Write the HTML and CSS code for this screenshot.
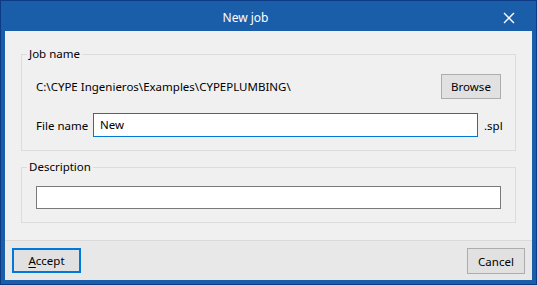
FILE: index.html
```html
<!DOCTYPE html>
<html lang="en">
<head>
<meta charset="utf-8">
<title>New job</title>
<link rel="stylesheet" href="styles.css">
</head>
<body>
<div class="window">
  <div class="titlebar">
    <div class="title">New job</div>
    <div class="close">
      <svg width="12" height="12" viewBox="0 0 12 12"><path d="M1 1 L11 11 M11 1 L1 11" stroke="#ffffff" stroke-width="1.4" fill="none"/></svg>
    </div>
  </div>
  <div class="content">
    <div class="main">
      <fieldset class="group group-job">
        <legend>Job name</legend>
        <div class="row row-path">
          <span class="path">C:\CYPE Ingenieros\Examples\CYPEPLUMBING\</span>
          <button class="btn btn-browse">Browse</button>
        </div>
        <div class="row row-file">
          <label class="lbl">File name</label>
          <div class="input input-focus">New</div>
          <span class="ext">.spl</span>
        </div>
      </fieldset>
      <fieldset class="group group-desc">
        <legend>Description</legend>
        <div class="input input-desc"></div>
      </fieldset>
    </div>
    <div class="footer">
      <button class="btn btn-accept"><u>A</u>ccept</button>
      <button class="btn btn-cancel">Cancel</button>
    </div>
  </div>
</div>
</body>
</html>
```
FILE: styles.css
```css
html, body {
  margin: 0;
  padding: 0;
}
body {
  font-family: "Noto Sans", "Open Sans", sans-serif;
  font-size: 11.5px;
  color: #000;
}
.window {
  box-sizing: border-box;
  width: 537px;
  height: 285px;
  background: #1a5ea9;
  border: 1px solid #0c3a84;
  padding: 0 4px 4px 4px;
  display: flex;
  flex-direction: column;
}
.titlebar {
  height: 30px;
  display: flex;
  align-items: center;
  color: #fff;
}
.title {
  flex: 1;
  text-align: center;
  font-size: 12px;
  padding-top: 2px;
}
.close {
  width: 46px;
  height: 30px;
  display: flex;
  align-items: center;
  justify-content: center;
  padding-top: 3px;
  box-sizing: border-box;
}
.content {
  flex: 1;
  background: #f0f0f0;
  display: flex;
  flex-direction: column;
}
.main {
  flex: 1;
  padding: 15px 16px 0 16px;
}
.group {
  margin: 0;
  padding: 0 14px;
  border: 1px solid #dcdcdc;
  min-width: 0;
}
.group legend {
  margin-left: -9px;
  padding: 0 2px;
  line-height: 16px;
}
.group-job {
  padding-top: 12px;
  padding-bottom: 13px;
}
.group-desc {
  margin-top: 8px;
  padding-top: 11px;
  padding-bottom: 13px;
}
.row {
  display: flex;
  align-items: center;
}
.row-path {
  height: 24px;
  justify-content: space-between;
}
.row-file {
  margin-top: 15px;
  height: 24px;
}
.lbl {
  width: 57px;
}
.input {
  box-sizing: border-box;
  background: #fff;
  border: 1px solid #7a7a7a;
  height: 24px;
  line-height: 22px;
  padding: 0 6px;
}
.input-focus {
  border-color: #0078d7;
  flex: 1;
}
.ext {
  width: 23px;
  padding-left: 6px;
  box-sizing: border-box;
}
.input-desc {
  height: 23px;
}
.btn {
  box-sizing: border-box;
  font-family: inherit;
  font-size: 11.5px;
  color: #000;
  background: #e1e1e1;
  border: 1px solid #adadad;
  padding: 0;
  margin: 0;
  height: 25px;
}
.btn-browse {
  width: 60px;
}
.footer {
  height: 40px;
  box-sizing: border-box;
  border-top: 1px solid #dadada;
  background: #e8e8e8;
  padding: 7px 7px 0 7px;
  display: flex;
  justify-content: space-between;
  align-items: flex-start;
}
.btn-accept {
  width: 69px;
  border: 2px solid #0078d7;
}
.btn-cancel {
  width: 58px;
  height: 26px;
}
.btn u {
  text-decoration: underline;
  text-underline-offset: 2px;
}
```
